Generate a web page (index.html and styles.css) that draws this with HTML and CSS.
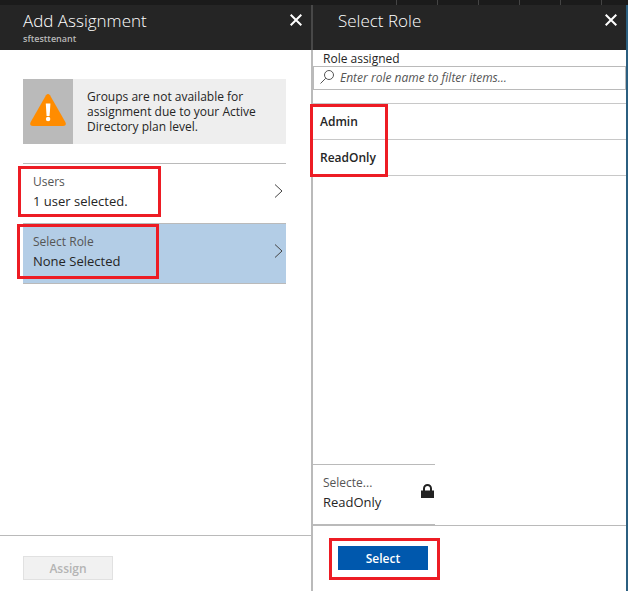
FILE: index.html
```html
<!DOCTYPE html>
<html lang="en">
<head>
<meta charset="utf-8">
<meta name="viewport" content="width=device-width, initial-scale=1">
<title>Add Assignment</title>
<link rel="stylesheet" href="styles.css">
</head>
<body>
<div class="topbar"><i></i><i></i><i></i><i></i><i></i><i></i></div>
<main class="blades">
  <section class="blade">
    <header class="blade-header">
      <div>
        <h1>Add Assignment</h1>
        <p class="subtitle">sftesttenant</p>
      </div>
      <button class="close" type="button" aria-label="Close Add Assignment">
        <svg width="12" height="12" viewBox="0 0 12 12"><path d="M.7 .7l10.600 10.600M11.300 .7L.7 11.300"/></svg>
      </button>
    </header>
    <div class="blade-body assignment">
      <div class="notice">
        <div class="notice-icon">
          <svg width="36" height="32" viewBox="0 0 36 32">
            <path d="M16 1.200Q18-1 20 1.200L35.300 28Q37 32 33 32H3Q-1 32 .7 28Z" fill="#ff8c00"/>
            <path d="M15.800 9.500h4.600l-.8 12.500h-3z" fill="#fff"/>
            <circle cx="18.100" cy="25" r="2.200" fill="#fff"/>
          </svg>
        </div>
        <p>Groups are not available for assignment due to your Active Directory plan level.</p>
      </div>
      <div class="steps">
        <button class="step" type="button">
          <span class="step-text mark mark-users"><span class="caption">Users</span><span class="value">1 user selected.</span></span>
          <svg class="chevron" width="9" height="14" viewBox="0 0 9 14"><path d="M1 .5l7 6.500-7 6.500"/></svg>
        </button>
        <button class="step active" type="button">
          <span class="step-text mark mark-role"><span class="caption">Select Role</span><span class="value">None Selected</span></span>
          <svg class="chevron" width="9" height="14" viewBox="0 0 9 14"><path d="M1 .5l7 6.500-7 6.500"/></svg>
        </button>
      </div>
    </div>
    <footer class="blade-footer">
      <button class="action" type="button" disabled>Assign</button>
    </footer>
  </section>
  <section class="blade">
    <header class="blade-header role-header">
      <h1>Select Role</h1>
      <button class="close" type="button" aria-label="Close Select Role">
        <svg width="12" height="12" viewBox="0 0 12 12"><path d="M.7 .7l10.600 10.600M11.300 .7L.7 11.300"/></svg>
      </button>
    </header>
    <div class="blade-body">
      <label class="filter-label" for="filter">Role assigned</label>
      <div class="filter">
        <svg width="14" height="14" viewBox="0 0 14 14"><circle cx="9" cy="5" r="4.500"/><path d="M5.800 8.200L.5 13.500"/></svg>
        <input id="filter" type="text" placeholder="Enter role name to filter items...">
      </div>
      <div class="roles mark">
        <button type="button">Admin</button>
        <button type="button">ReadOnly</button>
      </div>
      <div class="selected">
        <div>
          <span class="caption">Selecte...</span>
          <span class="value">ReadOnly</span>
        </div>
        <svg class="lock" width="13" height="14" viewBox="0 0 13 14"><path d="M3 7V4.500a3.500 3.500 0 0 1 7 0V7" fill="none" stroke="#222" stroke-width="2"/><path d="M0 6.500h13V14H0z" fill="#222"/></svg>
      </div>
    </div>
    <footer class="blade-footer role-footer">
      <span class="mark mark-select"><button class="action primary" type="button">Select</button></span>
    </footer>
  </section>
</main>
</body>
</html>
```
FILE: styles.css
```css
*, *::after { box-sizing: border-box; }
body {
  margin: 0;
  min-height: 100vh;
  display: flex;
  flex-direction: column;
  background: #fff;
  color: #252525;
  font: 12px/15px "Open Sans", "Noto Sans", sans-serif;
}
h1, p { margin: 0; }
button, input { font: inherit; color: inherit; }
button { padding: 0; border: 0; background: none; text-align: left; }
svg { flex: none; display: block; }

.topbar {
  height: 5px;
  display: flex;
  justify-content: flex-end;
  padding-right: 26px;
  gap: 40px;
  background: #1b1b1b;
}
.topbar i { width: 1px; background: #444; }

.blades {
  flex: 1;
  display: grid;
  grid-template-columns: 1fr 1fr;
  border-right: 2px solid #2b5f80;
}
.blade { display: flex; flex-direction: column; min-width: 0; }
.blade:first-child { border-right: 2px solid #bababa; }

.blade-header {
  height: 45px;
  display: flex;
  justify-content: space-between;
  padding: 4px 9px 0 23px;
  background: #252525;
  color: #fff;
}
.role-header { padding-left: 25px; }
.blade:first-child .blade-header { box-shadow: 2px 0 #484848; }
h1 { font-size: 17px; line-height: 24px; font-weight: 300; }
.subtitle { font-size: 9px; line-height: 12px; font-weight: 600; color: #b8b8b8; }
.close { align-self: flex-start; margin-top: 5px; }
.close svg { fill: none; stroke: #fff; stroke-width: 2; }

.blade-body { flex: 1; display: flex; flex-direction: column; }
.assignment { padding: 29px 25px 0 23px; }
.notice { display: flex; min-height: 65px; background: #eee; }
.notice-icon {
  flex: 0 0 50px;
  display: grid;
  place-items: center;
  padding-bottom: 3px;
  background: #bababa;
}
.notice p { padding: 10px 14px; }

.steps { margin-top: 19px; border-bottom: 1px solid #bababa; }
.step {
  width: 100%;
  height: 60px;
  display: flex;
  align-items: center;
  justify-content: space-between;
  padding: 0 3px 4px 10px;
  border-top: 1px solid #bababa;
}
.active { background: #b3cde6; }
.chevron { margin-bottom: 2px; fill: none; stroke: #444; }
.lock { margin-bottom: 3px; }
.caption { display: block; line-height: 18px; color: #555; }
.value { display: block; font-size: 13px; line-height: 20px; }

.blade-footer { height: 56px; padding: 20px 23px; border-top: 1px solid #bababa; }
.role-footer { height: 66px; padding-left: 25px; }
.action {
  display: block;
  width: 90px;
  height: 24px;
  border: 1px solid #e1e1e1;
  background: #f1f1f1;
  color: #b4b4b4;
  font-weight: 600;
  text-align: center;
}
.primary { border-color: #0058ad; background: #0058ad; color: #fff; }

.filter-label { padding: 1px 10px 0; }
.filter {
  height: 24px;
  display: flex;
  align-items: center;
  gap: 6px;
  padding: 0 6px 2px;
  border: 1px solid #bababa;
}
.filter svg { fill: none; stroke: #555; }
.filter input {
  flex: 1;
  min-width: 0;
  padding: 0;
  border: 0;
  outline: 0;
  font-style: italic;
}
.filter input::placeholder { color: #555; opacity: 1; }
.roles { margin-top: 13px; border-top: 1px solid #c8c8c8; }
.roles button {
  display: block;
  width: 100%;
  height: 36px;
  padding: 0 7px;
  border-bottom: 1px solid #c8c8c8;
  font-weight: 600;
}
.selected {
  width: 39%;
  height: 61px;
  display: flex;
  align-items: center;
  justify-content: space-between;
  margin-top: auto;
  padding: 0 1px 4px 10px;
  border: solid #bababa;
  border-width: 1px 0;
}

/* Red call-out frames drawn over the highlighted controls */
.mark { position: relative; }
.mark::after {
  content: "";
  position: absolute;
  inset: 0 auto auto -3px;
  width: 78px;
  height: 73px;
  border: 3px solid #ed1c24;
  pointer-events: none;
}
.mark-users::after { inset: -7px auto auto -15px; width: 143px; height: 51px; }
.mark-role::after { inset: -9px auto auto -16px; width: 142px; height: 55px; }
.mark-select { display: inline-block; }
.mark-select::after { inset: -8px auto auto -9px; width: 111px; height: 42px; }
```
